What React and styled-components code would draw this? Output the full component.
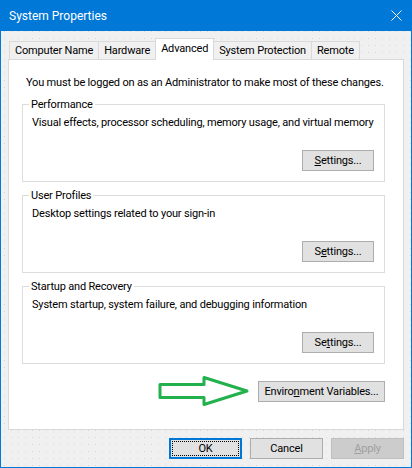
import React from 'react';
import styled, { createGlobalStyle } from 'styled-components';

const GlobalStyle = createGlobalStyle`
  body {
    margin: 0;
    font-family: Roboto, "Liberation Sans", Arial, sans-serif;
    font-size: 11px;
    letter-spacing: -0.18px;
    color: #000;
  }
`;

// dialog chrome
const Window = styled.div`
  width: 412px;
  height: 468px;
  box-sizing: border-box;
  border: 1px solid #0078d7;
  border-top: none;
  display: flex;
  flex-direction: column;
  background-color: #f0f0f0;
  background-image: radial-gradient(circle, #d8d8d8 0.6px, transparent 0.9px);
  background-size: 7px 7px;
`;

const TitleBar = styled.div`
  height: 31px;
  flex: none;
  background: #0078d7;
  color: #fff;
  font-size: 12px;
  letter-spacing: 0;
  display: flex;
  align-items: center;
  justify-content: space-between;
  padding: 0 10px 0 9px;
  margin: 0 -1px;
`;

const CloseIcon = () => (
  <svg width="11" height="11" viewBox="0 0 11 11">
    <path d="M0.5 0.5 L10.5 10.5 M10.5 0.5 L0.5 10.5" stroke="#fff" strokeWidth="1" fill="none" />
  </svg>
);

const Body = styled.div`
  flex: 1;
  display: flex;
  flex-direction: column;
  padding: 7px 7px 0 7px;
  min-height: 0;
`;

const TabStrip = styled.div`
  display: flex;
  align-items: flex-end;
  height: 21px;
  padding-left: 1px;
  position: relative;
  z-index: 1;
`;

const Tab = styled.div`
  box-sizing: border-box;
  border: 1px solid #d9d9d9;
  border-bottom: none;
  padding: 0 5px;
  white-space: nowrap;
  display: flex;
  align-items: center;
  height: ${p => (p.$active ? '22px' : '18px')};
  margin-bottom: ${p => (p.$active ? '-1px' : '0')};
  margin-left: -1px;
  padding-bottom: ${p => (p.$active ? '3px' : '0')};
  background: ${p => (p.$active ? '#fff' : '#f0f0f0')};
  &:first-child {
    margin-left: 0;
  }
`;

const Panel = styled.div`
  flex: 1;
  background: #fff;
  border: 1px solid #d9d9d9;
  padding: 15px 18px 0 13px;
  display: flex;
  flex-direction: column;
  line-height: 15px;
  white-space: nowrap;
`;

const Intro = styled.div`
  margin-left: 4px;
`;

const GroupBox = styled.fieldset`
  margin: 6px 0 0;
  border: 1px solid #dcdcdc;
  padding: 0 10px 10px 6px;
  min-width: 0;
  &:first-of-type {
    margin-top: 7px;
  }
`;

const Legend = styled.legend`
  padding: 0 2px;
  line-height: 15px;
`;

const Desc = styled.div`
  margin-top: 3px;
  padding-left: 3px;
`;

const ButtonRow = styled.div`
  display: flex;
  justify-content: flex-end;
  align-items: center;
  gap: ${p => p.$gap || 0}px;
  margin-top: ${p => p.$top || 0}px;
`;

const Button = styled.button`
  box-sizing: border-box;
  width: ${p => p.$w || 73}px;
  height: 21px;
  padding: 0;
  font-family: inherit;
  font-size: 11px;
  letter-spacing: inherit;
  color: ${p => (p.disabled ? '#a0a0a0' : '#000')};
  background: ${p => (p.disabled ? '#cccccc' : '#e1e1e1')};
  border: 1px solid ${p => (p.disabled ? '#bfbfbf' : '#adadad')};
  &.focused {
    border-color: #0078d7;
    box-shadow: inset 0 0 0 1px #0078d7;
    outline: 1px dotted #000;
    outline-offset: -4px;
  }
`;

const Footer = styled.div`
  display: flex;
  justify-content: flex-end;
  gap: 8px;
  padding: 8px 0 8px;
`;

const Arrow = () => (
  <svg width="94" height="34" viewBox="157 372 94 34">
    <path
      d="M160 382.5 L204 382.5 L204 375.5 L247 389 L204 402.5 L204 395.5 L160 395.5 Z"
      stroke="#22b14c"
      strokeWidth="3"
      strokeLinejoin="round"
      fill="none"
    />
  </svg>
);

const groups = [
  { title: 'Performance', desc: 'Visual effects, processor scheduling, memory usage, and virtual memory', key: 0 },
  { title: 'User Profiles', desc: 'Desktop settings related to your sign-in', key: 1 },
  { title: 'Startup and Recovery', desc: 'System startup, system failure, and debugging information', key: 2 },
];

const Accel = ({ text, at }) => (
  <>
    {text.slice(0, at)}
    <u>{text[at]}</u>
    {text.slice(at + 1)}
  </>
);

export default function App() {
  const tabs = ['Computer Name', 'Hardware', 'Advanced', 'System Protection', 'Remote'];
  return (
    <>
      <GlobalStyle />
      <Window>
        <TitleBar>
          <span>System Properties</span>
          <CloseIcon />
        </TitleBar>
        <Body>
          <TabStrip>
            {tabs.map(t => (
              <Tab key={t} $active={t === 'Advanced'}>{t}</Tab>
            ))}
          </TabStrip>
          <Panel>
            <Intro>You must be logged on as an Administrator to make most of these changes.</Intro>
            {groups.map(g => (
              <GroupBox key={g.title}>
                <Legend>{g.title}</Legend>
                <Desc>{g.desc}</Desc>
                <ButtonRow $top={20}>
                  <Button $w={72}>
                    <Accel text="Settings..." at={g.key} />
                  </Button>
                </ButtonRow>
              </GroupBox>
            ))}
            <ButtonRow $top={10} $gap={7}>
              <Arrow />
              <Button $w={127}>
                <Accel text="Environment Variables..." at={6} />
              </Button>
            </ButtonRow>
          </Panel>
          <Footer>
            <Button className="focused">OK</Button>
            <Button>Cancel</Button>
            <Button disabled>
              <Accel text="Apply" at={0} />
            </Button>
          </Footer>
        </Body>
      </Window>
    </>
  );
}
